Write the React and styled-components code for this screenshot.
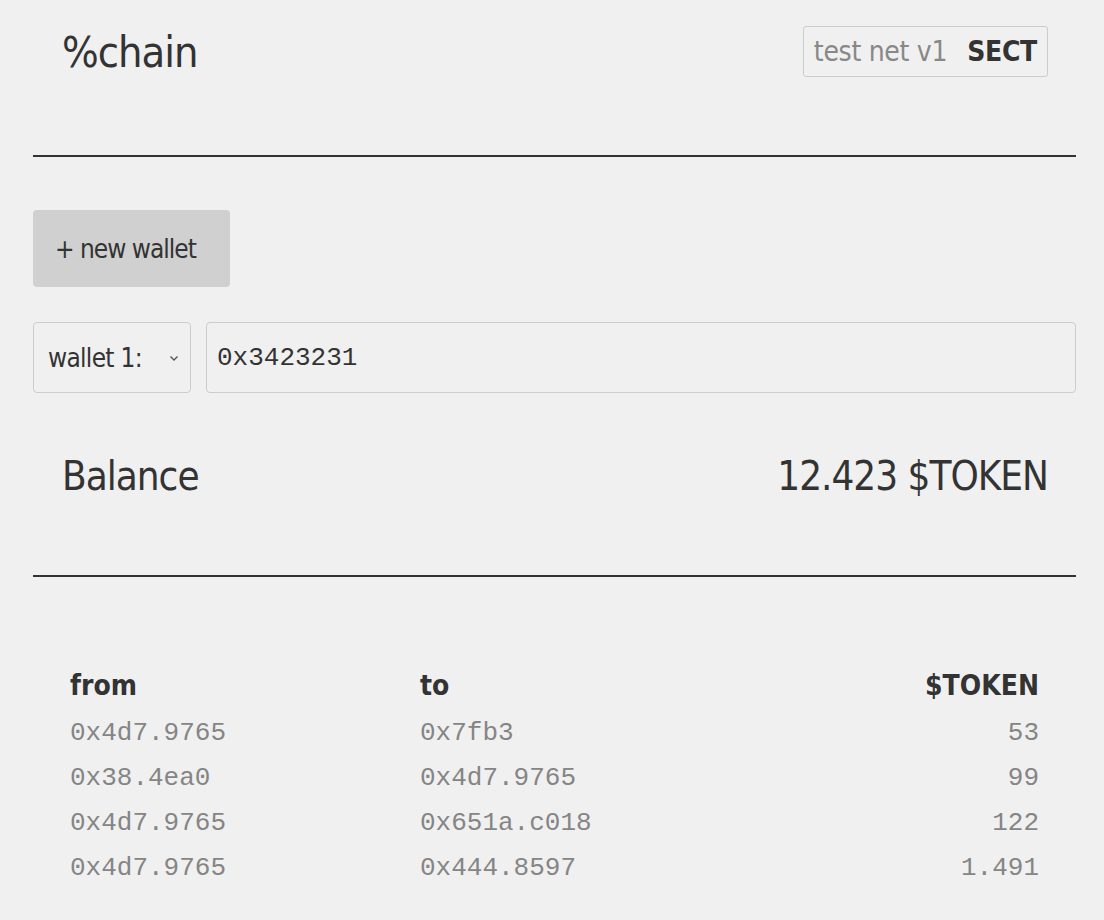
import React from "react";
import styled, { createGlobalStyle } from "styled-components";

const sans = `"DejaVu Sans Condensed", "DejaVu Sans", sans-serif`;
const mono = `"Liberation Mono", "DejaVu Sans Mono", monospace`;

const GlobalStyle = createGlobalStyle`
  html, body {
    margin: 0;
    padding: 0;
    background: #f0f0f0;
  }
  body {
    font-family: ${sans};
    color: #333;
  }
`;

const Page = styled.div`
  width: 1043px;
  padding: 26px 28px 0 33px;
`;

const Header = styled.header`
  display: flex;
  justify-content: space-between;
  align-items: center;
  padding: 0 28px 0 29px;
  height: 51px;
`;

const Logo = styled.h1`
  margin: 0;
  font-family: ${sans};
  font-size: 43px;
  letter-spacing: -1px;
  font-weight: 400;
  color: #333;
`;

const Badge = styled.div`
  display: flex;
  align-items: center;
  gap: 20px;
  height: 49px;
  padding: 0 10px;
  border: 1px solid #ccc;
  border-radius: 3px;
  font-size: 28px;
  letter-spacing: -0.3px;
`;

const Net = styled.span`
  color: #888;
`;

const Symbol = styled.span`
  font-weight: 700;
  color: #333;
`;

const Rule = styled.hr`
  margin: ${(p) => p.$top}px 0 0;
  border: 0;
  height: 2px;
  background: #333;
`;

const NewWallet = styled.button`
  display: block;
  margin-top: 53px;
  width: 197px;
  height: 77px;
  padding: 0 0 0 2px;
  text-align: left;
  text-indent: 20px;
  border: 0;
  border-radius: 4px;
  background: #d0d0d0;
  font-family: ${sans};
  font-size: 26px;
  letter-spacing: -1px;
  color: #333;
`;

const WalletRow = styled.div`
  display: flex;
  gap: 15px;
  margin-top: 35px;
  height: 71px;
`;

const SelectBox = styled.div`
  display: flex;
  align-items: center;
  justify-content: space-between;
  width: 158px;
  box-sizing: border-box;
  padding: 0 10px 0 14px;
  border: 1px solid #ccc;
  border-radius: 4px;
  font-size: 26px;
  letter-spacing: -0.7px;
`;

const Address = styled.div`
  flex: 1;
  display: flex;
  align-items: center;
  padding: 0 10px;
  border: 1px solid #ccc;
  border-radius: 4px;
  font-family: ${mono};
  font-size: 26px;
  color: #333;
`;

const BalanceRow = styled.div`
  display: flex;
  justify-content: space-between;
  align-items: center;
  margin-top: 60px;
  padding: 0 28px 0 29px;
  font-size: 40px;
  letter-spacing: -1px;
`;

const Table = styled.div`
  margin-top: 92px;
  padding: 0 37px;
  display: grid;
  grid-template-columns: 350px 1fr auto;
`;

const HeadCell = styled.div`
  font-family: ${sans};
  font-weight: 700;
  font-size: 28px;
  color: #333;
  height: 42px;
  text-align: ${(p) => (p.$right ? "right" : "left")};
`;

const Cell = styled.div`
  font-family: ${mono};
  font-size: 26px;
  color: #858585;
  height: 45px;
  line-height: 45px;
  text-align: ${(p) => (p.$right ? "right" : "left")};
`;

const Chevron = () => (
  <svg width="12" height="12" viewBox="0 0 12 12">
    <path d="M2.5 4.5 L6 8 L9.5 4.5" fill="none" stroke="#555" strokeWidth="1.4" />
  </svg>
);

const rows = [
  ["0x4d7.9765", "0x7fb3", "53"],
  ["0x38.4ea0", "0x4d7.9765", "99"],
  ["0x4d7.9765", "0x651a.c018", "122"],
  ["0x4d7.9765", "0x444.8597", "1.491"],
];

export default function App() {
  return (
    <Page>
      <GlobalStyle />
      <Header>
        <Logo>%chain</Logo>
        <Badge>
          <Net>test net v1</Net>
          <Symbol>SECT</Symbol>
        </Badge>
      </Header>
      <Rule $top={78} />
      <NewWallet>+ new wallet</NewWallet>
      <WalletRow>
        <SelectBox>
          wallet 1:
          <Chevron />
        </SelectBox>
        <Address>0x3423231</Address>
      </WalletRow>
      <BalanceRow>
        <span>Balance</span>
        <span>12.423 $TOKEN</span>
      </BalanceRow>
      <Rule $top={76} />
      <Table>
        <HeadCell>from</HeadCell>
        <HeadCell>to</HeadCell>
        <HeadCell $right>$TOKEN</HeadCell>
        {rows.map((r, i) => (
          <React.Fragment key={i}>
            <Cell>{r[0]}</Cell>
            <Cell>{r[1]}</Cell>
            <Cell $right>{r[2]}</Cell>
          </React.Fragment>
        ))}
      </Table>
    </Page>
  );
}
